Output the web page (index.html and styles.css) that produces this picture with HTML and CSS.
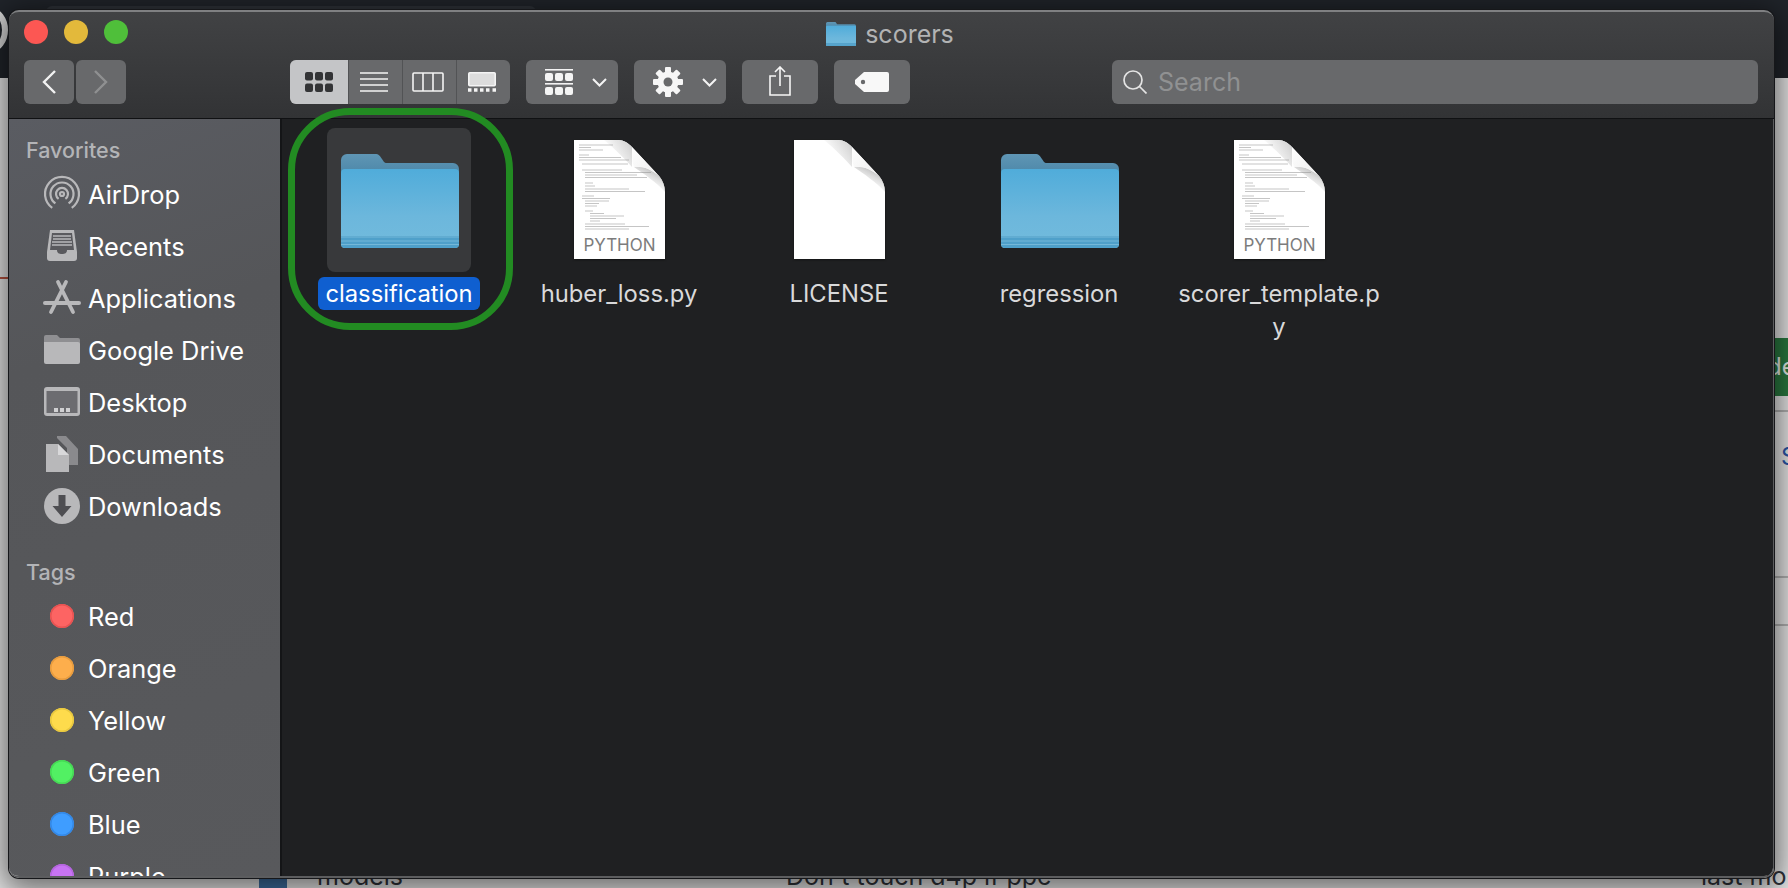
FILE: index.html
```html
<!DOCTYPE html>
<html lang="en">
<head>
    <meta charset="UTF-8">
    <title>scorers</title>
    <link rel="stylesheet" href="styles.css">
</head>
<body>
    <svg class="defs" width="0" height="0">
        <defs>
            <linearGradient id="folderBack" x1="0" y1="0" x2="0" y2="1">
                <stop offset="0" stop-color="#5f96b5"/>
                <stop offset="1" stop-color="#3f7c9f"/>
            </linearGradient>
            <linearGradient id="folderFront" x1="0" y1="0" x2="0" y2="1">
                <stop offset="0" stop-color="#50acda"/>
                <stop offset="0.6" stop-color="#6cb7dc"/>
                <stop offset="1" stop-color="#72bbdd"/>
            </linearGradient>
            <linearGradient id="docFold" gradientUnits="userSpaceOnUse" x1="58" y1="8" x2="38" y2="20">
                <stop offset="0" stop-color="#d4d4d4"/>
                <stop offset="1" stop-color="#ffffff"/>
            </linearGradient>
            <linearGradient id="docUnder" gradientUnits="userSpaceOnUse" x1="76" y1="30" x2="66" y2="50">
                <stop offset="0" stop-color="#c8c8c8"/>
                <stop offset="1" stop-color="#ffffff" stop-opacity="0"/>
            </linearGradient>
            <linearGradient id="flap" x1="0" y1="0" x2="1" y2="1">
                <stop offset="0" stop-color="#ffffff"/>
                <stop offset="1" stop-color="#ececec"/>
            </linearGradient>
            <symbol id="folder" viewBox="0 0 118 94">
                <path d="M0 6a6 6 0 0 1 6-6h28c4 0 5 2 7 5l2 3c1 1 2 1 4 1h65a6 6 0 0 1 6 6v20H0z" fill="url(#folderBack)"/>
                <path d="M0 19a4 4 0 0 1 4-4h110a4 4 0 0 1 4 4v71a4 4 0 0 1-4 4H4a4 4 0 0 1-4-4z" fill="url(#folderFront)"/>
                <path d="M0 82h118v8a4 4 0 0 1-4 4H4a4 4 0 0 1-4-4z" fill="#4fa0ca"/>
                <path d="M0 83h118M0 87h118M0 90.500h118" stroke="#74b8d9" stroke-width="1" fill="none"/>
            </symbol>
            <symbol id="doc" viewBox="0 0 91 119">
                <path d="M0 0H44C50 0 54 3 58 7L85 36C89 41 91 46 91 52V119H0Z" fill="#fff"/>
                <path d="M30 0H44C50 0 54 3 58 7V27C52 20 40 8 30 0Z" fill="url(#docFold)"/>
                <path d="M60 27C68 26 78 29 86 37C89 41 91 46 91 52C82 42 70 34 60 27Z" fill="url(#docUnder)"/>
                <path d="M58 7C58 15 58 22 60 27C68 26 78 29 86 37Z" fill="url(#flap)"/>
            </symbol>
            <symbol id="codeLines" viewBox="0 0 91 119">
                <path d="M5 5h34M5 7.500h12M5 10h24M5 15h10M5 17.500h42M5 20h50M8 24h46M8 30h40M11 32.500h66M11 35h52M11 37.500h62M11 43h8M11 46h10M11 49h44M11 51.500h60M8 56h12M8 58.500h28M11 61h24M11 63.500h14M11 66h12M11 71h8M16 73.500h14M16 76h34M16 78.500h26M16 81h10M11 84h40M11 86.500h64M11 89h44" stroke="#8a8a8a" stroke-width="0.500" fill="none"/>
            </symbol>
        </defs>
    </svg>

    <div class="backdrop">
        <div class="site-header">
            <div class="site-logo"></div>
            <div class="site-search"></div>
        </div>
        <div class="site-line"></div>
        <div class="site-rule rule-a"></div>
        <div class="site-rule rule-b"></div>
        <div class="site-rule rule-c"></div>
        <div class="site-button">de</div>
        <div class="site-link">S</div>
        <div class="site-file">
            <span class="site-folder"></span>
            <span class="site-name">models</span>
            <span class="site-msg">Don't touch d4p if ppc</span>
            <span class="site-age">last mo</span>
        </div>
    </div>

    <div class="window">
        <header class="titlebar">
            <div class="lights">
                <span class="light red"></span>
                <span class="light yellow"></span>
                <span class="light green"></span>
            </div>
            <div class="title">
                <svg class="title-icon"><use href="#folder"/></svg>
                <span>scorers</span>
            </div>
            <div class="toolbar">
                <div class="nav">
                    <div class="tool nav-btn">
                        <svg width="16" height="26" viewBox="0 0 16 26"><path d="M14 2 3 13l11 11" fill="none" stroke="#f2f2f2" stroke-width="2.400"/></svg>
                    </div>
                    <div class="tool nav-btn">
                        <svg width="16" height="26" viewBox="0 0 16 26"><path d="m2 2 11 11L2 24" fill="none" stroke="#8f9091" stroke-width="2.400"/></svg>
                    </div>
                </div>

                <div class="views">
                    <div class="view view-on">
                        <svg width="28" height="20" viewBox="0 0 28 20" fill="#333436">
                            <rect width="8" height="8.500" rx="2"/><rect x="10" width="8" height="8.500" rx="2"/><rect x="20" width="8" height="8.500" rx="2"/>
                            <rect y="11.500" width="8" height="8.500" rx="2"/><rect x="10" y="11.500" width="8" height="8.500" rx="2"/><rect x="20" y="11.500" width="8" height="8.500" rx="2"/>
                        </svg>
                    </div>
                    <div class="view">
                        <svg width="28" height="20" viewBox="0 0 28 20" fill="none" stroke="#f4f4f4" stroke-width="1.600"><path d="M0 1h28M0 7h28M0 13h28M0 19h28"/></svg>
                    </div>
                    <div class="view">
                        <svg width="32" height="20" viewBox="0 0 32 20" fill="none" stroke="#f4f4f4" stroke-width="1.600"><rect x="1" y="1" width="30" height="18" rx="1"/><path d="M11 1v18M21 1v18"/></svg>
                    </div>
                    <div class="view">
                        <svg width="28" height="20" viewBox="0 0 28 20"><rect x="0.800" y="0.800" width="26.400" height="13" rx="1" fill="#dcdcdc" stroke="#f4f4f4" stroke-width="1.600"/><path d="M0 18h3.500M6 18h3.500M12 18h3.500M18 18h3.500M24.500 18H28" stroke="#f4f4f4" stroke-width="3.600"/></svg>
                    </div>
                </div>

                <div class="tool menu-btn">
                    <svg width="28" height="26" viewBox="0 0 28 26" fill="#f4f4f4">
                        <rect width="28" height="1.600"/>
                        <rect y="4" width="8" height="8" rx="2"/><rect x="10" y="4" width="8" height="8" rx="2"/><rect x="20" y="4" width="8" height="8" rx="2"/>
                        <rect y="14" width="28" height="1.600"/>
                        <rect y="18" width="8" height="8" rx="2"/><rect x="10" y="18" width="8" height="8" rx="2"/><rect x="20" y="18" width="8" height="8" rx="2"/>
                    </svg>
                    <svg width="15" height="9" viewBox="0 0 15 9"><path d="m1 1 6.500 6.500L14 1" fill="none" stroke="#f4f4f4" stroke-width="2"/></svg>
                </div>

                <div class="tool menu-btn">
                    <svg width="30" height="30" viewBox="0 0 30 30">
                        <g fill="#f6f6f6">
                            <rect x="12" y="0" width="6" height="30" rx="1"/>
                            <rect x="12" y="0" width="6" height="30" rx="1" transform="rotate(45 15 15)"/>
                            <rect x="12" y="0" width="6" height="30" rx="1" transform="rotate(90 15 15)"/>
                            <rect x="12" y="0" width="6" height="30" rx="1" transform="rotate(135 15 15)"/>
                            <circle cx="15" cy="15" r="10.500"/>
                        </g>
                        <circle cx="15" cy="15" r="4.500" fill="#68696b"/>
                    </svg>
                    <svg width="15" height="9" viewBox="0 0 15 9"><path d="m1 1 6.500 6.500L14 1" fill="none" stroke="#f4f4f4" stroke-width="2"/></svg>
                </div>

                <div class="tool share-btn">
                    <svg width="22" height="30" viewBox="0 0 22 30" fill="none" stroke="#f6f6f6" stroke-width="1.600"><path d="M7 10H1v19h20V10h-6M11 20V1M6 6l5-5 5 5"/></svg>
                </div>

                <div class="tool tag-btn">
                    <svg width="34" height="20" viewBox="0 0 34 20"><path d="M9 0h23a2 2 0 0 1 2 2v16a2 2 0 0 1-2 2H9L0 12V8zM8 7.800a2.200 2.200 0 1 0 0 4.400 2.200 2.200 0 0 0 0-4.400z" fill="#f8f8f8" fill-rule="evenodd"/></svg>
                </div>

                <div class="tool search">
                    <svg width="24" height="24" viewBox="0 0 24 24" fill="none" stroke="#e4e4e4" stroke-width="1.700"><circle cx="10" cy="10" r="9"/><path d="m16.500 16.500 7 7"/></svg>
                    <span>Search</span>
                </div>
            </div>
        </header>

        <div class="content">
            <aside class="sidebar">
                <h4 class="side-title">Favorites</h4>
                <div class="side-row">
                    <svg class="side-icon" viewBox="0 0 40 40" fill="none" stroke="#b8b8ba" stroke-width="2.200">
                        <path d="M10.250 33.900A17 17 0 1 1 29.750 33.900M13.400 29.400A11.500 11.500 0 1 1 26.600 29.400M16.600 24.900A6 6 0 1 1 23.400 24.900"/>
                        <circle cx="20" cy="20" r="2"/>
                    </svg>
                    <span>AirDrop</span>
                </div>
                <div class="side-row">
                    <svg class="side-icon" viewBox="0 0 40 40">
                        <path d="M8 4h24l3 22v6a3 3 0 0 1-3 3H8a3 3 0 0 1-3-3v-6z" fill="#b8b8ba"/>
                        <path d="M10 7h20l2 17h-7c0 3-2 4-5 4s-5-1-5-4H8z" fill="#5a5a5e"/>
                        <path d="M11 10h18M11 13h18M10 16h20M10 19h20" stroke="#b8b8ba" stroke-width="1.500"/>
                    </svg>
                    <span>Recents</span>
                </div>
                <div class="side-row">
                    <svg class="side-icon" viewBox="0 0 40 40" fill="none" stroke="#b8b8ba" stroke-linecap="round">
                        <path d="M3 25h34" stroke-width="4"/>
                        <path d="M16 4l15 30M24 4 9 34" stroke-width="3.800"/>
                    </svg>
                    <span>Applications</span>
                </div>
                <div class="side-row">
                    <svg class="side-icon" viewBox="0 0 40 40">
                        <path d="M2 7a2 2 0 0 1 2-2h11l3 3h18a2 2 0 0 1 2 2v4H2z" fill="#8f8f92"/>
                        <path d="M2 12h34a2 2 0 0 1 2 2v18a2 2 0 0 1-2 2H4a2 2 0 0 1-2-2z" fill="#b8b8ba"/>
                    </svg>
                    <span>Google Drive</span>
                </div>
                <div class="side-row">
                    <svg class="side-icon" viewBox="0 0 40 40">
                        <rect x="2" y="5" width="36" height="29" rx="3" fill="#b8b8ba"/>
                        <rect x="4.500" y="9" width="31" height="22" fill="#6c6c70"/>
                        <path d="M12 28h4M18 28h4M24 28h4" stroke="#d0d0d2" stroke-width="4"/>
                    </svg>
                    <span>Desktop</span>
                </div>
                <div class="side-row">
                    <svg class="side-icon" viewBox="0 0 40 40">
                        <path d="M15 2h9l12 13v16H25V14L15 4z" fill="#8a8a8d"/>
                        <path d="M4 10h12l11 11v17H4z" fill="#b8b8ba"/>
                        <path d="M16 10v11h11z" fill="#d8d8da"/>
                    </svg>
                    <span>Documents</span>
                </div>
                <div class="side-row">
                    <svg class="side-icon" viewBox="0 0 40 40">
                        <circle cx="20" cy="20" r="18" fill="#b8b8ba"/>
                        <path d="M16.500 9h7v11h6L20 31 10.500 20h6z" fill="#4e4e52"/>
                    </svg>
                    <span>Downloads</span>
                </div>

                <h4 class="side-title tags-title">Tags</h4>
                <div class="side-row"><i class="dot dot-red"></i><span>Red</span></div>
                <div class="side-row"><i class="dot dot-orange"></i><span>Orange</span></div>
                <div class="side-row"><i class="dot dot-yellow"></i><span>Yellow</span></div>
                <div class="side-row"><i class="dot dot-green"></i><span>Green</span></div>
                <div class="side-row"><i class="dot dot-blue"></i><span>Blue</span></div>
                <div class="side-row"><i class="dot dot-purple"></i><span>Purple</span></div>
            </aside>

            <main class="files">
                <div class="file">
                    <div class="file-icon selected"><svg class="folder-art"><use href="#folder"/></svg></div>
                    <div class="file-name picked">classification</div>
                </div>
                <div class="file">
                    <div class="file-icon">
                        <div class="doc-art">
                            <svg class="doc-svg"><use href="#doc"/><use href="#codeLines"/></svg>
                            <span class="doc-type">PYTHON</span>
                        </div>
                    </div>
                    <div class="file-name">huber_loss.py</div>
                </div>
                <div class="file">
                    <div class="file-icon">
                        <div class="doc-art"><svg class="doc-svg"><use href="#doc"/></svg></div>
                    </div>
                    <div class="file-name">LICENSE</div>
                </div>
                <div class="file">
                    <div class="file-icon"><svg class="folder-art"><use href="#folder"/></svg></div>
                    <div class="file-name">regression</div>
                </div>
                <div class="file">
                    <div class="file-icon">
                        <div class="doc-art">
                            <svg class="doc-svg"><use href="#doc"/><use href="#codeLines"/></svg>
                            <span class="doc-type">PYTHON</span>
                        </div>
                    </div>
                    <div class="file-name">scorer_template.p<br>y</div>
                </div>
            </main>
        </div>

        <div class="ring"></div>
    </div>
</body>
</html>
```

FILE: styles.css
```css
* {
    margin: 0;
    padding: 0;
    box-sizing: border-box;
}

body {
    width: 1788px;
    height: 888px;
    overflow: hidden;
    position: relative;
    background: #e6e6e6;
    font-family: "Inter", "Liberation Sans", sans-serif;
}

.defs {
    position: absolute;
}

/* web page behind the window */
.backdrop {
    position: absolute;
    inset: 0;
}

.site-header {
    height: 78px;
    background: #20242a;
}

.site-logo {
    position: absolute;
    left: -26px;
    top: 8px;
    width: 34px;
    height: 44px;
    border: 6px solid #d8d8d8;
    border-radius: 50%;
}

.site-search {
    position: absolute;
    left: 46px;
    top: 6px;
    width: 490px;
    height: 20px;
    background: #2e3238;
    border-radius: 6px;
}

.site-line {
    position: absolute;
    left: 0;
    top: 277px;
    width: 9px;
    height: 2px;
    background: #b5523f;
}

.site-rule {
    position: absolute;
    left: 1774px;
    width: 14px;
    height: 2px;
    background: #b2b2b2;
}

.rule-a { top: 410px; }
.rule-b { top: 576px; }
.rule-c { top: 624px; }

.site-button {
    position: absolute;
    left: 1774px;
    top: 338px;
    width: 14px;
    height: 58px;
    overflow: hidden;
    background: #2a7a40;
    color: #e6eee8;
    font-size: 24px;
    line-height: 58px;
    text-indent: -7px;
    white-space: nowrap;
}

.site-link {
    position: absolute;
    left: 1781px;
    top: 442px;
    color: #2a55a8;
    font-size: 24px;
    line-height: 30px;
}

.site-file {
    color: #30333a;
    font-size: 25px;
}

.site-file span {
    position: absolute;
    top: 861px;
    line-height: 30px;
    white-space: nowrap;
}

.site-file .site-folder {
    left: 259px;
    top: 874px;
    width: 28px;
    height: 20px;
    background: #3e6ea0;
    border-radius: 3px;
}

.site-name { left: 317px; }
.site-msg { left: 786px; }
.site-age { left: 1701px; }

/* finder window */
.window {
    position: absolute;
    left: 9px;
    top: 10px;
    width: 1765px;
    height: 868px;
    display: flex;
    flex-direction: column;
    border-radius: 10px;
    box-shadow: 0 0 0 1px #16171a, 0 6px 30px 6px rgba(0, 0, 0, 0.55);
}

.titlebar {
    height: 109px;
    flex-shrink: 0;
    display: flex;
    flex-direction: column;
    position: relative;
    border-radius: 10px 10px 0 0;
    border-top: 2px solid #7f8082;
    border-bottom: 1px solid #101113;
    background: linear-gradient(#414244, #323335);
}

.lights {
    position: absolute;
    left: 15px;
    top: 8px;
    display: flex;
    gap: 16px;
}

.light {
    width: 24px;
    height: 24px;
    border-radius: 50%;
}

.red { background: #fc5753; }
.yellow { background: #e3b93b; }
.green { background: #4fbf3a; }

.title {
    height: 48px;
    display: flex;
    justify-content: center;
    align-items: center;
    gap: 9px;
    padding: 0 3px 5px 0;
    color: #b2b3b4;
    font-size: 25px;
}

.title-icon {
    width: 30px;
    height: 24px;
}

.toolbar {
    display: flex;
    align-items: stretch;
    height: 44px;
    padding: 0 16px 0 15px;
}

.tool {
    display: flex;
    align-items: center;
    justify-content: center;
    background: #68696b;
    border-radius: 6px;
}

.nav {
    display: flex;
    gap: 2px;
}

.nav-btn {
    width: 50px;
}

.views {
    display: flex;
    width: 220px;
    margin-left: 164px;
    border-radius: 6px;
    overflow: hidden;
    background: #68696b;
}

.view {
    flex: 1;
    display: flex;
    align-items: center;
    justify-content: center;
    padding-right: 4px;
    border-left: 1px solid #525355;
}

.view-on {
    flex: none;
    width: 58px;
    padding: 0;
    border-left: 0;
    background: #c4c5c7;
}

.menu-btn {
    width: 92px;
    margin-left: 16px;
    justify-content: flex-start;
    gap: 19px;
    padding-left: 19px;
}

.share-btn {
    width: 76px;
    margin-left: 16px;
    padding-bottom: 2px;
}

.tag-btn {
    width: 76px;
    margin-left: 16px;
}

.search {
    flex: 1;
    margin-left: 202px;
    justify-content: flex-start;
    gap: 11px;
    padding-left: 11px;
    color: #909192;
    font-size: 25px;
}

.content {
    flex: 1;
    min-height: 0;
    display: flex;
    overflow: hidden;
    border-radius: 0 0 10px 10px;
    border-right: 1px solid #5c5d5f;
    border-bottom: 2px solid #5c5d5f;
}

.sidebar {
    width: 273px;
    flex-shrink: 0;
    overflow: hidden;
    padding-top: 19px;
    border-right: 2px solid #141517;
    background: linear-gradient(160deg, #5a5c62, #555659 30%, #58595c);
    color: #fff;
    font-size: 25.400px;
}

.side-title {
    height: 24px;
    margin: 0 0 6px 17px;
    color: #b3b4b7;
    font-size: 21.500px;
    font-weight: 500;
    line-height: 24px;
}

.tags-title {
    margin-top: 28px;
}

.side-row {
    height: 52px;
    display: flex;
    align-items: center;
    gap: 6px;
    padding-left: 33px;
    white-space: nowrap;
}

.side-icon {
    width: 40px;
    height: 40px;
    flex-shrink: 0;
}

.dot {
    width: 24px;
    height: 24px;
    margin: 0 8px;
    border-radius: 50%;
}

.dot-red { background: #fd6463; box-shadow: inset 0 0 0 1.500px #e85352; }
.dot-orange { background: #fdae4c; box-shadow: inset 0 0 0 1.500px #e89c3e; }
.dot-yellow { background: #fedb4c; box-shadow: inset 0 0 0 1.500px #e8c83f; }
.dot-green { background: #52f063; box-shadow: inset 0 0 0 1.500px #46d955; }
.dot-blue { background: #3f9dff; box-shadow: inset 0 0 0 1.500px #3488e6; }
.dot-purple { background: #c874f4; box-shadow: inset 0 0 0 1.500px #b565e0; }

.files {
    flex: 1;
    display: grid;
    grid-template-columns: repeat(5, 220px);
    align-items: start;
    padding: 9px 0 0 7px;
    background: #1f2022;
}

.file {
    display: flex;
    flex-direction: column;
    align-items: center;
}

.file-icon {
    width: 144px;
    height: 144px;
    display: flex;
    align-items: center;
    justify-content: center;
    border-radius: 8px;
}

.selected {
    background: #38393b;
}

.folder-art {
    width: 118px;
    height: 94px;
    margin: 2px 0 0 1px;
}

.doc-art {
    position: relative;
    width: 91px;
    height: 119px;
    margin: 0 0 2px 1px;
}

.doc-svg {
    width: 91px;
    height: 119px;
    filter: drop-shadow(0 1px 1px rgba(0, 0, 0, 0.4));
}

.doc-type {
    position: absolute;
    left: 0;
    right: 0;
    bottom: 4px;
    text-align: center;
    color: #7c7c7c;
    font-size: 17px;
    line-height: 20px;
}

.file-name {
    margin-top: 5px;
    padding: 0 7px;
    color: #d9d9da;
    font-size: 23.800px;
    line-height: 33px;
    text-align: center;
    white-space: nowrap;
}

.picked {
    background: #0f5fd0;
    border-radius: 6px;
    color: #fff;
}

/* green marker drawn over the screenshot */
.ring {
    position: absolute;
    left: 279px;
    top: 98px;
    width: 225px;
    height: 222px;
    border: 7px solid #228b22;
    border-radius: 62px;
}
```
